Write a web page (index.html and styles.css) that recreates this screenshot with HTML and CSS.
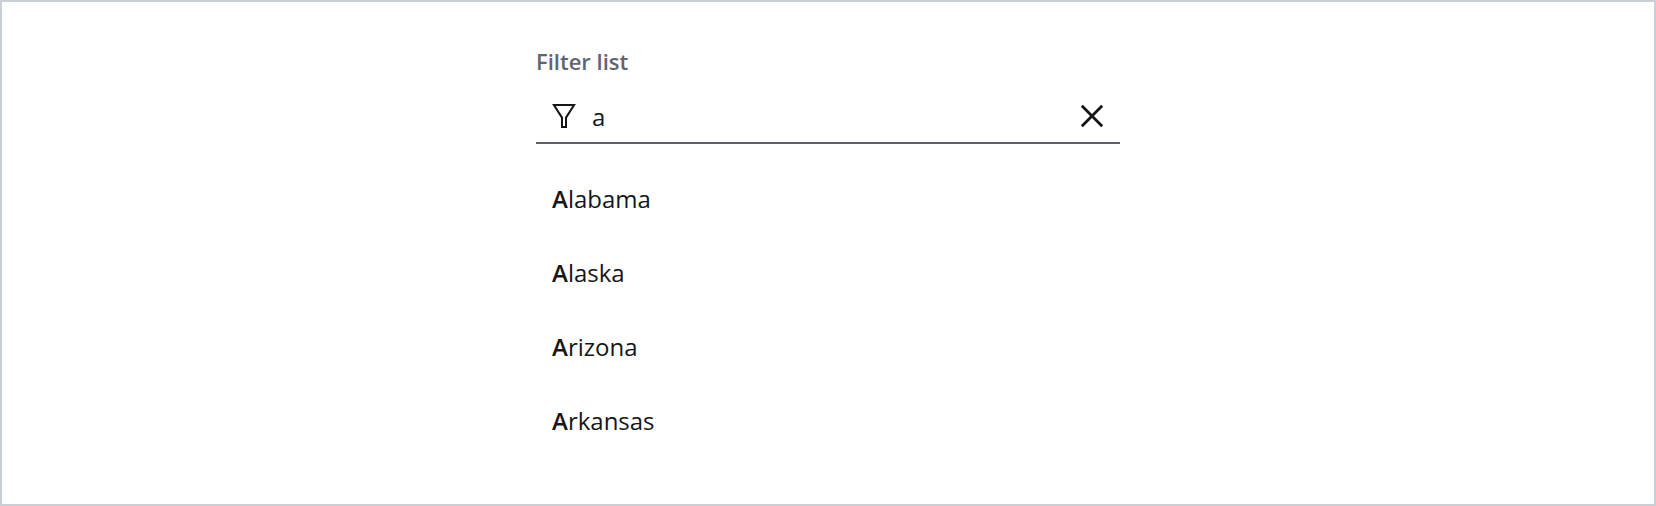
FILE: index.html
```html
<!DOCTYPE html>
<html lang="en">
<head>
<meta charset="utf-8">
<title>Filter list</title>
<link rel="stylesheet" href="styles.css">
</head>
<body>
<main class="frame">
  <section class="filter">
    <div class="label">Filter list</div>
    <div class="field">
      <svg class="funnel" viewBox="0 0 24 24"><path d="M1.9 1H22.1L14 13.6V23H10V13.6Z"/></svg>
      <span class="value">a</span>
      <svg class="clear" viewBox="0 0 24 24"><path d="M1.8 1.8L22.2 22.2M22.2 1.8L1.8 22.2"/></svg>
    </div>
    <ul class="options">
      <li class="option"><b class="match">A</b>labama</li>
      <li class="option"><b class="match">A</b>laska</li>
      <li class="option"><b class="match">A</b>rizona</li>
      <li class="option"><b class="match">A</b>rkansas</li>
    </ul>
  </section>
</main>
</body>
</html>
```

FILE: styles.css
```css
* { box-sizing: border-box; }
body { margin: 0; font-family: "Open Sans", sans-serif; color: #161616; }
.frame { height: 506px; border: 2px solid #cacfd6; background: #fff; display: flex; justify-content: center; padding-top: 43px; }
.filter { width: 584px; }
.label { height: 33px; line-height: 32px; font-size: 22px; font-weight: 600; color: #616571; }
.field { height: 66px; border-bottom: 2px solid #5e616b; display: flex; align-items: center; padding: 12px 16px 0; }
.funnel { width: 24px; height: 24px; fill: none; stroke: #161616; stroke-width: 2; }
.value { margin-left: 16px; padding-top: 2px; flex: 1; font-size: 24px; line-height: 32px; }
.clear { width: 24px; height: 24px; fill: none; stroke: #161616; stroke-width: 2.8; }
.options { list-style: none; margin: 0; padding: 18px 16px 0; }
.option { height: 74px; line-height: 74px; font-size: 24px; }
.match { font-weight: 600; }
```
